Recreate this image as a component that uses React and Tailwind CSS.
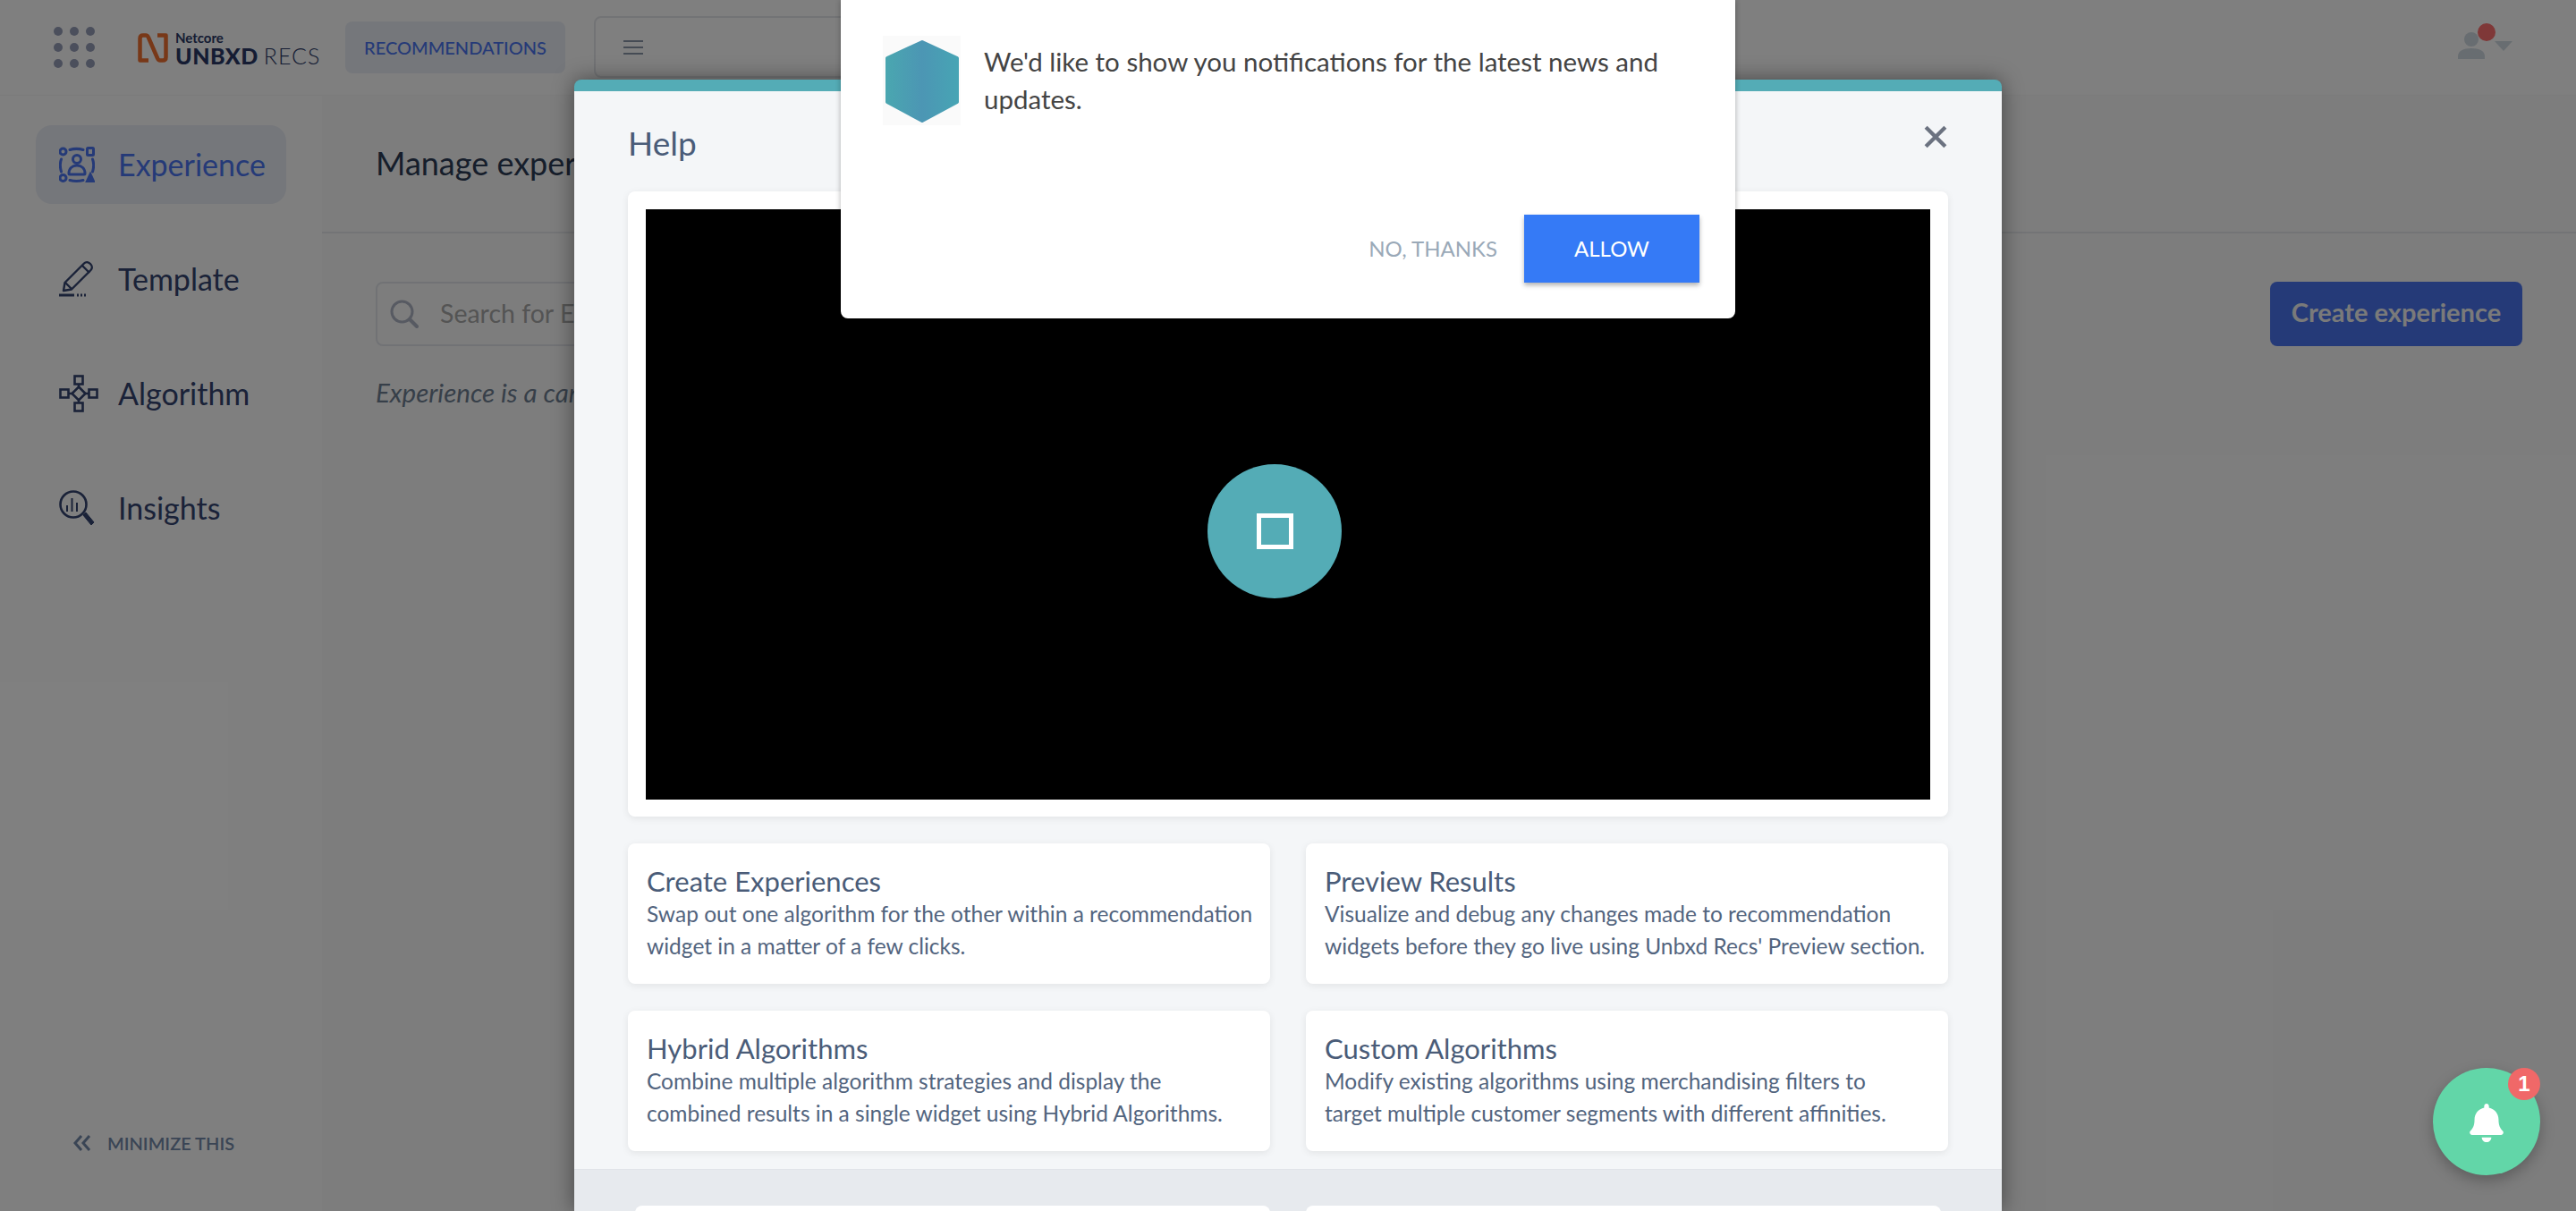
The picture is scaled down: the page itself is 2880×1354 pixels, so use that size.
import React from 'react';
import { FaBell } from 'react-icons/fa';

const appFont = { fontFamily: 'Lato, sans-serif' };

const helpCards = [
  {
    title: 'Create Experiences',
    lines: ['Swap out one algorithm for the other within a recommendation', 'widget in a matter of a few clicks.'],
  },
  {
    title: 'Preview Results',
    lines: ['Visualize and debug any changes made to recommendation', "widgets before they go live using Unbxd Recs' Preview section."],
  },
  {
    title: 'Hybrid Algorithms',
    lines: ['Combine multiple algorithm strategies and display the', 'combined results in a single widget using Hybrid Algorithms.'],
  },
  {
    title: 'Custom Algorithms',
    lines: ['Modify existing algorithms using merchandising filters to', 'target multiple customer segments with different affinities.'],
  },
];

const ExperienceIcon = () => (
  <svg viewBox="0 0 40 40" className="w-10 h-10" fill="none" stroke="currentColor" strokeWidth="3" strokeLinecap="round">
    <circle cx="4.500" cy="5.500" r="3.500" />
    <rect x="31.500" y="1.500" width="7" height="8" rx="1" />
    <circle cx="4.500" cy="35" r="3.500" />
    <path d="M35 31l3.500 7.500h-7z" fill="currentColor" />
    <path d="M12 3.500c5-1.500 10-1.500 15 0M12 37.500c5 1.200 10 1.200 15 0M2.500 14c-1.500 4-1.500 9 0 14M37.500 14c1.500 4 1.500 9 0 14" />
    <circle cx="20" cy="14" r="4.500" />
    <path d="M11 30c0-6 4-9 9-9s9 3 9 9c0 .700-.500 1-1 1H12c-.500 0-1-.300-1-1z" />
  </svg>
);

const TemplateIcon = () => (
  <svg viewBox="0 0 40 40" className="w-10 h-10" fill="none" stroke="currentColor" strokeWidth="2.4" strokeLinejoin="round">
    <path d="M5 33l1.500-9L28 2.500c2-2 5-1.500 7 .5s2.500 5 .5 7L14 31.500z" />
    <path d="M26 5l8 8M7 24l7 7" />
    <path d="M0 38h17" strokeWidth="3" />
    <path d="M20 38h10" strokeWidth="3" strokeDasharray="2 2" />
  </svg>
);

const AlgorithmIcon = () => (
  <svg viewBox="0 0 44 42" className="w-11 h-[42px]" fill="none" stroke="currentColor" strokeWidth="2.6">
    <rect x="17.500" y="1.500" width="9" height="9" />
    <rect x="17.500" y="31.500" width="9" height="9" />
    <rect x="1.500" y="16.500" width="9" height="9" />
    <rect x="33.500" y="16.500" width="9" height="9" />
    <path d="M22 13.500l7.500 7.500-7.500 7.500-7.500-7.500z" />
    <path d="M22 10.500v3M22 28.500v3M10.500 21h4M29.500 21h4" />
  </svg>
);

const InsightsIcon = () => (
  <svg viewBox="0 0 40 40" className="w-10 h-10" fill="none" stroke="currentColor" strokeWidth="2.6">
    <circle cx="16" cy="16" r="14.500" />
    <path d="M9 17v7M14.500 9v15M20 14v10" strokeWidth="2" />
    <path d="M27 28l3-3 9 11-3 3z" fill="currentColor" strokeWidth="1" />
  </svg>
);

const navItems = [
  { label: 'Experience', icon: <ExperienceIcon />, active: true },
  { label: 'Template', icon: <TemplateIcon /> },
  { label: 'Algorithm', icon: <AlgorithmIcon /> },
  { label: 'Insights', icon: <InsightsIcon /> },
];

const Header = () => (
  <header className="h-[106px] shrink-0 flex items-start bg-white pl-[60px] pr-[70px]">
    <div className="mt-[30px] grid grid-cols-3 gap-x-2 gap-y-2 w-[46px]">
      {[...Array(9)].map((_, i) => (
        <span key={i} className="w-2.5 h-2.5 rounded-full bg-[#969eb8]" />
      ))}
    </div>

    {/* Logo */}
    <div className="ml-[48px] mt-[37px] flex items-start w-[200px]">
      <svg viewBox="0 0 34 33" className="w-[34px] h-[33px] shrink-0" fill="none" stroke="#f07030" strokeWidth="4.500" strokeLinejoin="round">
        <path d="M12 30.500H2.500V6q0-3.500 3.500-3.500h3q2 0 3 2.500l10 23q1 2.500 3 2.500h3q3.500 0 3.500-3.500V2.500H22" />
      </svg>
      <div className="ml-2 -mt-[3px] flex flex-col">
        <span className="text-[15px] leading-[17px] font-bold text-[#2a3866]">Netcore</span>
        <div className="flex items-baseline -mt-[1px]">
          <span className="text-[25px] leading-[24px] font-black tracking-[0.5px] text-[#2a3866]">UNBXD</span>
          <span className="ml-1.5 text-[25px] leading-[24px] font-light tracking-[1px] text-[#2a3866]">RECS</span>
        </div>
      </div>
    </div>

    <div className="ml-[32px] mt-6 w-[246px] h-[58px] rounded-lg bg-[#eaeef6] flex items-center justify-center text-[20px] font-medium text-[#4b75f0]">
      RECOMMENDATIONS
    </div>

    <div className="ml-[32px] mt-[18px] w-[320px] h-[69px] rounded-lg border-2 border-[#e4e6ea] pl-[31px] pt-[25px]">
      <div className="w-[22px] flex flex-col gap-[5px]">
        <span className="h-0.5 bg-[#8a96a8]" />
        <span className="h-0.5 bg-[#8a96a8]" />
        <span className="h-0.5 bg-[#8a96a8]" />
      </div>
    </div>

    {/* User menu */}
    <div className="ml-auto mt-[26px] relative w-[62px] h-[40px]">
      <svg viewBox="0 0 30 30" className="absolute left-0 top-0 mt-[10px] w-[30px] h-[30px]" fill="#d0dae2">
        <circle cx="15" cy="8" r="8" />
        <path d="M0 30v-3c0-6 6-9 15-9s15 3 15 9v3z" />
      </svg>
      <span className="absolute left-[22px] top-0 w-5 h-5 rounded-full bg-[#ff7070]" />
      <span className="absolute left-[41px] top-5 w-0 h-0 border-x-10 border-x-transparent border-t-11 border-t-[#d0dae2]" />
    </div>
  </header>
);

const Sidebar = () => (
  <aside className="w-[360px] shrink-0 flex flex-col justify-between bg-white pl-10 pr-10 pt-[33px] pb-[61px]">
    <nav className="flex flex-col gap-10">
      {navItems.map((item) => (
        <div
          key={item.label}
          className={`h-[88px] w-[280px] rounded-[18px] pl-7 flex items-center gap-[22px] text-[34px] ${
            item.active ? 'bg-[#eaeef6] text-[#4b75f0]' : 'text-[#344470]'
          }`}
        >
          <span className="w-11 flex justify-start -ml-0.5 shrink-0">{item.icon}</span>
          <span className="-mt-0.5">{item.label}</span>
        </div>
      ))}
    </nav>
    <div className="pl-[42px] flex items-center gap-[18px] text-[20px] font-semibold text-[#748aaa]">
      <svg viewBox="0 0 20 18" className="w-5 h-[18px]" fill="none" stroke="currentColor" strokeWidth="3">
        <path d="M9 1L2 9l7 8M18 1l-7 8 7 8" />
      </svg>
      MINIMIZE THIS
    </div>
  </aside>
);

const MainContent = () => (
  <main className="flex-1 bg-[#fbfbfb] flex flex-col">
    <div className="h-[154px] border-b-2 border-[#e6e8ec] pl-[60px] pt-[50px] text-[36px] leading-[50px] text-[#2c3c56] shrink-0">
      Manage experience
    </div>
    <div className="px-[60px] pt-[54px] flex items-start justify-between">
      <div className="w-[560px] h-[72px] rounded-lg border-2 border-[#e2e5ea] flex items-center pl-[14px] gap-6 text-[28.5px] text-[#a8a8a8]">
        <svg viewBox="0 0 32 32" className="w-8 h-8 shrink-0" fill="none" stroke="#aeb4c4" strokeWidth="3" strokeLinecap="round">
          <circle cx="13.500" cy="13.500" r="11.500" />
          <path d="M22 22l8 8" strokeWidth="4" />
        </svg>
        <span className="-mt-0.5">Search for Experience</span>
      </div>
      <button className="w-[282px] h-[72px] rounded-lg bg-[#4a74f0] text-[29px] leading-[68px] font-bold text-[#f4f4f4] pb-1">
        Create experience
      </button>
    </div>
    <p className="pl-[60px] pt-[32px] text-[29.5px] leading-[40px] italic text-[#6f7f92]">
      Experience is a campaign that you run on your site
    </p>
  </main>
);

const HelpCard = ({ title, lines }) => (
  <div className="bg-white rounded-lg shadow-[0_2px_8px_rgba(0,0,0,0.08)] h-[157px] px-[21px] pt-[23px]">
    <h3 className="text-[31px] leading-[38px] text-[#4a5c78]">{title}</h3>
    {lines.map((line) => (
      <p key={line} className="text-[24.5px] leading-[36px] whitespace-nowrap text-[#52647e]">
        {line}
      </p>
    ))}
  </div>
);

const HelpModal = () => (
  <div className="absolute left-[642px] top-[89px] w-[1596px] h-[1265px] overflow-hidden rounded-t-lg bg-[#f4f6f8] border-t-[13px] border-[#54acb6] shadow-[0_0_24px_rgba(0,0,0,0.45)] flex flex-col">
    <div className="flex items-start justify-between pl-[60px] pr-[60px] pt-[33px] h-[112px] shrink-0">
      <h2 className="text-[37px] leading-[50px] text-[#4a5c78]">Help</h2>
      <svg viewBox="0 0 24 24" className="w-[26px] h-[26px] mt-[5px] mr-[1px]" fill="none" stroke="#6b7280" strokeWidth="4">
        <path d="M2 2l20 20M22 2L2 22" />
      </svg>
    </div>

    <div className="px-[60px] shrink-0">
      {/* Video */}
      <div className="bg-white rounded-lg shadow-[0_2px_8px_rgba(0,0,0,0.08)] p-[20px] h-[699px]">
        <div className="h-[660px] bg-black flex items-center justify-center">
          <div className="w-[150px] h-[150px] -ml-[30px] mt-[60px] rounded-full bg-[#54acb6] flex items-center justify-center">
            <span className="w-[41px] h-[40px] border-[5px] border-white" />
          </div>
        </div>
      </div>

      <div className="mt-[30px] grid grid-cols-2 gap-x-10 gap-y-[30px]">
        {helpCards.map((card) => (
          <HelpCard key={card.title} {...card} />
        ))}
      </div>
    </div>

    <div className="mt-5 flex-1 bg-[#e7eaee] border-t border-[#e0e3e8] px-[68px] pt-10">
      <div className="grid grid-cols-2 gap-x-10">
        <div className="h-[100px] rounded-lg bg-white" />
        <div className="h-[100px] rounded-lg bg-white" />
      </div>
    </div>
  </div>
);

const PushPrompt = () => (
  <div
    className="absolute left-[940px] top-0 w-[1000px] h-[356px] rounded-b-lg bg-white shadow-[0_0_6px_rgba(0,0,0,0.3)]"
    style={{ fontFamily: 'Lato, sans-serif' }}
  >
    <div className="flex items-start pl-[47px] pr-[30px] pt-[40px] h-[240px]">
      <div className="w-[87px] h-[100px] shrink-0 bg-[#fafafa]">
        <svg viewBox="0 0 87 100" className="w-full h-full">
          <defs>
            <linearGradient id="hex" x1="0" x2="1" y1="0" y2="0">
              <stop offset="0" stopColor="#4aa6b0" />
              <stop offset="0.5" stopColor="#4c96b4" />
              <stop offset="1" stopColor="#47a4b4" />
            </linearGradient>
          </defs>
          <polygon
            points="44,7 83,25 83,74 44,95 5,74 5,25"
            fill="url(#hex)"
            stroke="url(#hex)"
            strokeWidth="4"
            strokeLinejoin="round"
          />
        </svg>
      </div>
      <p className="ml-[26px] mt-[8px] text-[29.5px] leading-[42px] text-[#444444]">
        We'd like to show you notifications for the latest news and updates.
      </p>
    </div>
    <div className="flex items-center justify-end pr-10 gap-[30px]">
      <span className="text-[24px] text-[#9aa9b8]">NO, THANKS</span>
      <button className="w-[196px] h-[76px] bg-[#357af6] text-white text-[24px] shadow-[0_3px_5px_rgba(0,0,0,0.3)]">
        ALLOW
      </button>
    </div>
  </div>
);

const BellButton = () => (
  <div className="absolute left-[2720px] top-[1194px] w-[120px] h-[120px] rounded-full bg-[#62d6a8] shadow-[0_6px_16px_rgba(0,0,0,0.25)] flex items-center justify-center text-white">
    <FaBell className="w-[38px] h-[43px] mt-[3px]" />
    <span
      className="absolute right-0 top-0 w-9 h-9 rounded-full bg-[#f06868] flex items-center justify-center text-[24px] font-bold"
      style={{ fontFamily: '"Liberation Sans", sans-serif' }}
    >
      1
    </span>
  </div>
);

const App = () => {
  return (
    <div className="relative w-[2880px] h-[1354px] overflow-hidden bg-white" style={appFont}>
      <div className="h-full flex flex-col">
        <Header />
        <div className="flex-1 flex border-t border-[#f6f6f6]">
          <Sidebar />
          <MainContent />
        </div>
      </div>

      {/* Dimmed backdrop */}
      <div className="absolute inset-0 bg-black/50" />

      <HelpModal />
      <PushPrompt />
      <BellButton />
    </div>
  );
};

export default App;
